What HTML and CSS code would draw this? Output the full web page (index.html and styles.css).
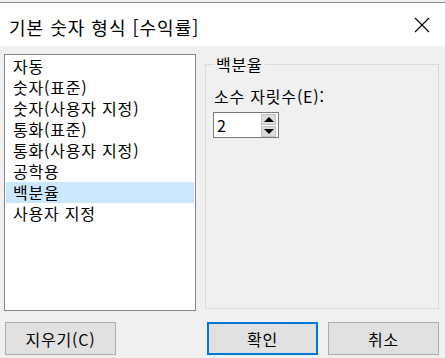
FILE: index.html
```html
<!DOCTYPE html>
<html lang="ko">
<head>
    <meta charset="UTF-8">
    <title>기본 숫자 형식</title>
    <link rel="stylesheet" href="styles.css">
</head>
<body>
    <div class="strip"></div>
    <div class="titlebar">
        <span class="title">기본 숫자 형식 [수익률]</span>
        <svg class="close" width="16" height="16" viewBox="0 0 16 16">
            <path d="M1 1 L15 15 M15 1 L1 15" stroke="#000" stroke-width="1.1" fill="none"/>
        </svg>
    </div>
    <div class="dialog">
        <div class="main">
            <ul class="listbox">
                <li>자동</li>
                <li>숫자(표준)</li>
                <li>숫자(사용자 지정)</li>
                <li>통화(표준)</li>
                <li>통화(사용자 지정)</li>
                <li>공학용</li>
                <li class="selected">백분율</li>
                <li>사용자 지정</li>
            </ul>
            <fieldset class="group">
                <legend>백분율</legend>
                <label class="field-label">소수 자릿수(E):</label>
                <div class="spinner">
                    <span class="spinner-value">2</span>
                    <div class="spin-buttons">
                        <div class="spin-btn"><span class="arrow-up"></span></div>
                        <div class="spin-btn"><span class="arrow-down"></span></div>
                    </div>
                </div>
            </fieldset>
        </div>
        <div class="buttons">
            <button class="btn">지우기(C)</button>
            <div class="right-buttons">
                <button class="btn default">확인</button>
                <button class="btn">취소</button>
            </div>
        </div>
    </div>
</body>
</html>
```

FILE: styles.css
```css
body {
    margin: 0;
    width: 445px;
    height: 358px;
    overflow: hidden;
    font-family: "Noto Sans CJK KR", "Noto Sans", sans-serif;
    font-size: 16px;
    letter-spacing: 0.8px;
    color: #000;
    background-color: #f0f0f0;
}
.strip {
    height: 2px;
    background-color: #f0f0f0;
    border-bottom: 1px solid #8a8a8a;
}
.titlebar {
    height: 43px;
    background-color: #fff;
    display: flex;
    align-items: center;
    justify-content: space-between;
    padding: 0 15px 0 9px;
}
.title {
    font-size: 18px;
    letter-spacing: 1px;
    line-height: 20px;
    margin-top: 4px;
}
.close {
    margin-top: 1px;
}
.dialog {
    padding: 8px 6px 0 4px;
}
.main {
    display: flex;
    gap: 9px;
}
.listbox {
    list-style: none;
    margin: 0;
    padding: 1px;
    width: 189px;
    height: 253px;
    border: 1px solid #828790;
    background-color: #fff;
}
.listbox li {
    height: 21px;
    line-height: 21px;
    padding-left: 7px;
}
.listbox li.selected {
    background-color: #cce8ff;
}
.group {
    margin: 0;
    padding: 0 8px;
    width: 234px;
    height: 255px;
    box-sizing: border-box;
    border: 1px solid #dcdcdc;
    flex: none;
    align-self: flex-start;
    min-width: 0;
}
.group legend {
    padding: 0 2px;
    line-height: 21px;
}
.field-label {
    display: block;
    line-height: 21px;
    margin-top: 11px;
}
.spinner {
    margin: 5px 0 0 -1px;
    width: 64px;
    height: 24px;
    border: 1px solid #7a7a7a;
    background-color: #fff;
    display: flex;
    justify-content: space-between;
    align-items: center;
}
.spinner-value {
    padding-left: 3px;
    line-height: 24px;
}
.spin-buttons {
    display: flex;
    flex-direction: column;
    gap: 1px;
    margin-right: 2px;
}
.spin-btn {
    width: 13px;
    height: 9px;
    background-color: #dadada;
    border: 1px solid #c4c4c4;
    display: flex;
    align-items: center;
    justify-content: center;
}
.arrow-up {
    border-left: 5px solid transparent;
    border-right: 5px solid transparent;
    border-bottom: 5px solid #000;
}
.arrow-down {
    border-left: 5px solid transparent;
    border-right: 5px solid transparent;
    border-top: 5px solid #000;
}
.buttons {
    display: flex;
    justify-content: space-between;
    margin-top: 11px;
    padding-left: 1px;
}
.right-buttons {
    display: flex;
    gap: 10px;
}
.btn {
    width: 111px;
    height: 33px;
    font-family: inherit;
    font-size: 16px;
    letter-spacing: 0.8px;
    color: #000;
    background-color: #e1e1e1;
    border: 1px solid #adadad;
    border-radius: 0;
    padding: 0;
}
.btn.default {
    border: 2px solid #0078d7;
}
```
